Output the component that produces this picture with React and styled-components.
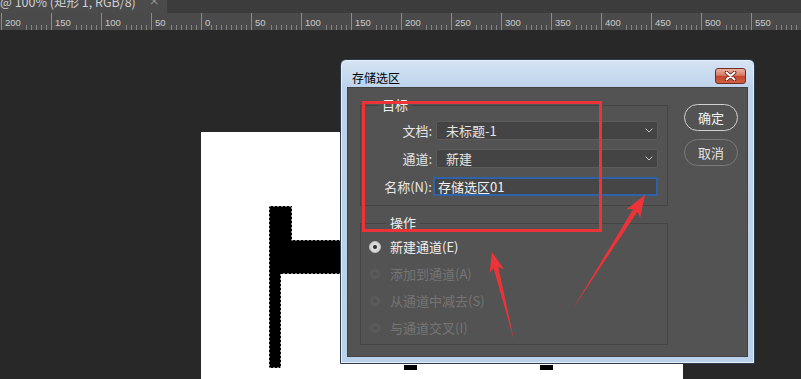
import React from 'react'
import styled, {createGlobalStyle} from 'styled-components'

const rulerLabels = [200, 150, 100, 50, 0, 50, 100, 150, 200, 250, 300, 350, 400, 450, 500, 550]

const targetFields = [
	{id: 'doc', label: '文档:', value: '未标题-1'},
	{id: 'channel', label: '通道:', value: '新建'},
]

const operations = [
	{id: 'new', label: '新建通道(E)', checked: true},
	{id: 'add', label: '添加到通道(A)', disabled: true},
	{id: 'sub', label: '从通道中减去(S)', disabled: true},
	{id: 'cross', label: '与通道交叉(I)', disabled: true},
]

const Chevron = () => (
	<svg width="8" height="5" viewBox="0 0 8 5">
		<path d="M0.6 0.6 L4 4 L7.4 0.6" fill="none" stroke="#c6c6c6" strokeWidth="1" />
	</svg>
)

const CloseGlyph = () => (
	<svg width="13" height="10" viewBox="0 0 13 10">
		<path d="M2.5 1.5 L10.5 8.5 M10.5 1.5 L2.5 8.5" stroke="#5a1d14" strokeWidth="3.6" strokeLinecap="round" />
		<path d="M2.5 1.5 L10.5 8.5 M10.5 1.5 L2.5 8.5" stroke="#ffffff" strokeWidth="2" strokeLinecap="round" />
	</svg>
)

// the selection on the document: black glyph stroke with marching ants
const Selection = () => (
	<svg width="482" height="247" viewBox="0 0 482 247">
		<path d="M68 74 H91 V108 H200 V142 H80 V236 H68 Z" fill="#000" stroke="#fff" strokeWidth="1.2" strokeDasharray="2 2" />
		<rect x="203" y="233" width="13" height="5" fill="#000" />
		<rect x="339" y="233" width="13" height="5" fill="#000" />
	</svg>
)

const Annotations = () => (
	<Overlay width="801" height="379" viewBox="0 0 801 379">
		<rect x="363.5" y="102.5" width="237" height="128" fill="none" stroke="#ec3438" strokeWidth="3" />
		<polygon points="492,252 504.1,269.6 498.3,266.9 514,340 493.5,268.1 489.6,273.2" fill="#ec3438" />
		<polygon points="645,195 640,217.9 637.5,211.5 572,310 633.3,208.9 626.4,209.3" fill="#ec3438" />
	</Overlay>
)

const App = () => {
	return (
		<>
			<GlobalStyle />
			<Screen>
				<DocTabs>
					<DocTab>
						<TabTitle>@ 100% (矩形 1, RGB/8)</TabTitle>
						<TabClose>×</TabClose>
					</DocTab>
				</DocTabs>
				<Ruler>
					{rulerLabels.map((n, i) => (
						<RulerStep key={i}>
							<RulerNum>{n}</RulerNum>
						</RulerStep>
					))}
				</Ruler>
				<Workspace>
					<Canvas>
						<Selection />
					</Canvas>
				</Workspace>

				<Dialog>
					<TitleBar>
						<Title>存储选区</Title>
						<CloseBtn type="button"><CloseGlyph /></CloseBtn>
					</TitleBar>
					<Body>
						<Main>
							<Group $pad="9px 9px 9px 0">
								<Legend>目标</Legend>
								<Rows>
									{targetFields.map(f => (
										<FieldRow key={f.id}>
											<FieldLabel>{f.label}</FieldLabel>
											<SelectBox>
												<span>{f.value}</span>
												<Chevron />
											</SelectBox>
										</FieldRow>
									))}
									<FieldRow>
										<FieldLabel>名称(N):</FieldLabel>
										<NameInput type="text" defaultValue="存储选区01" />
									</FieldRow>
								</Rows>
							</Group>
							<Group $pad="3px 8px 3px 8px" $gapTop="10px">
								<Legend>操作</Legend>
								{operations.map(op => (
									<RadioRow key={op.id} $disabled={op.disabled}>
										<RadioDot $checked={op.checked} />
										{op.label}
									</RadioRow>
								))}
							</Group>
						</Main>
						<Actions>
							<PillBtn type="button" $primary>确定</PillBtn>
							<PillBtn type="button">取消</PillBtn>
						</Actions>
					</Body>
				</Dialog>

				<Annotations />
			</Screen>
		</>
	)
}

const GlobalStyle = createGlobalStyle`
	html, body {
		margin: 0;
		padding: 0;
		background: #282828;
	}
	body {
		font-family: "Noto Sans CJK SC", "Noto Sans", sans-serif;
	}
`

const Screen = styled.div`
	position: relative;
	width: 801px;
	height: 379px;
	overflow: hidden;
	background: #282828;
	display: flex;
	flex-direction: column;
`

const DocTabs = styled.div`
	height: 13px;
	flex: none;
	display: flex;
	background: #3c3c3c;
	overflow: hidden;
`

const DocTab = styled.div`
	width: 167px;
	display: flex;
	align-items: flex-start;
	background: #4b4b4b;
	overflow: hidden;
`

const TabTitle = styled.span`
	margin-top: -5px;
	font-size: 12.5px;
	line-height: 14px;
	color: #cfcfcf;
	white-space: nowrap;
`

const TabClose = styled.span`
	margin: -6px 0 0 13px;
	font-family: "DejaVu Sans", sans-serif;
	font-size: 13px;
	line-height: 14px;
	color: #8e8e8e;
`

const Ruler = styled.div`
	height: 17px;
	flex: none;
	display: flex;
	padding-left: 1px;
	background: #4a4a4a;
	overflow: hidden;
`

const RulerStep = styled.div`
	flex: 0 0 50px;
	box-sizing: border-box;
	height: 100%;
	display: flex;
	align-items: flex-start;
	border-left: 1px solid #8c8c8c;
	background: repeating-linear-gradient(to right, transparent 0 4px, #858585 4px 5px) left bottom / 100% 5px no-repeat;
`

const RulerNum = styled.span`
	margin: 3px 0 0 2px;
	padding: 0 1px;
	font-family: "Liberation Sans", Arial, sans-serif;
	font-size: 9.5px;
	line-height: 14px;
	color: #cacaca;
	background: #4a4a4a;
`

const Workspace = styled.div`
	flex: 1;
	box-sizing: border-box;
	padding: 102px 0 0 201px;
	overflow: hidden;
`

const Canvas = styled.div`
	width: 482px;
	height: 247px;
	background: #fff;
	svg { display: block; }
`

const Dialog = styled.div`
	position: absolute;
	left: 340px;
	top: 59px;
	width: 415px;
	height: 305px;
	box-sizing: border-box;
	display: flex;
	flex-direction: column;
	padding: 0 6px 6px;
	border: 1px solid #2d3b4b;
	border-radius: 6px 6px 0 0;
	background: linear-gradient(#d6e4f4, #bdd3eb 27px, #b9d1ea);
	box-shadow: inset 0 0 0 1px #e6eef8;
`

const TitleBar = styled.div`
	height: 27px;
	flex: none;
	display: flex;
	justify-content: space-between;
	align-items: flex-start;
	padding: 0 2px 0 5px;
`

const Title = styled.span`
	margin-top: 10px;
	font-size: 12px;
	line-height: 16px;
	color: #000;
`

const CloseBtn = styled.button`
	margin-top: 8px;
	width: 31px;
	height: 16px;
	padding: 0;
	display: flex;
	align-items: center;
	justify-content: center;
	border: 1px solid #6d2d22;
	border-radius: 3px;
	background: linear-gradient(#eab0a2, #d77b66 45%, #c4452e 52%, #d0603f);
`

const Body = styled.div`
	height: 270px;
	flex: none;
	box-sizing: border-box;
	display: flex;
	align-items: flex-start;
	gap: 16px;
	padding: 0 9px 0 12px;
	background: #535353;
	border: 1px solid #424242;
`

const Main = styled.div`
	width: 308px;
	padding-top: 10px;
	display: flex;
	flex-direction: column;
`

const Group = styled.fieldset`
	box-sizing: border-box;
	width: 308px;
	min-width: 0;
	margin: ${p => p.$gapTop || 0} 0 0;
	padding: ${p => p.$pad};
	border: 1px solid #444444;
`

const Legend = styled.legend`
	margin-left: 17px;
	padding: 0 4px;
	font-size: 13px;
	line-height: 14px;
	color: #efefef;
`

const Rows = styled.div`
	display: flex;
	flex-direction: column;
	gap: 9px;
`

const FieldRow = styled.div`
	height: 19px;
	display: flex;
	align-items: center;
	gap: 4px;
`

const FieldLabel = styled.span`
	width: 71px;
	flex: none;
	text-align: right;
	font-size: 13px;
	line-height: 19px;
	color: #e6e6e6;
	white-space: nowrap;
`

const SelectBox = styled.div`
	width: 222px;
	height: 19px;
	box-sizing: border-box;
	display: flex;
	align-items: center;
	justify-content: space-between;
	padding: 0 4px 0 9px;
	background: #444444;
	border: 1px solid #5c5c5c;
	border-radius: 2px;
	font-size: 13px;
	line-height: 17px;
	color: #e4e4e4;
`

const NameInput = styled.input`
	width: 226px;
	height: 19px;
	box-sizing: border-box;
	margin: 0 0 0 -3px;
	padding: 0 0 0 3px;
	background: #464646;
	border: 2px solid #2f62a8;
	outline: none;
	font-family: "Noto Sans CJK SC", "Noto Sans", sans-serif;
	font-size: 13px;
	line-height: 15px;
	color: #f2f2f2;
`

const RadioRow = styled.div`
	height: 27px;
	display: flex;
	align-items: center;
	gap: 9px;
	font-size: 13px;
	color: ${p => (p.$disabled ? '#757575' : '#f0f0f0')};
`

const RadioDot = styled.span`
	width: 12px;
	height: 12px;
	flex: none;
	box-sizing: border-box;
	border-radius: 50%;
	display: flex;
	align-items: center;
	justify-content: center;
	background: ${p => (p.$checked ? '#d9d9d9' : '#5a5a5a')};
	border: 1px solid ${p => (p.$checked ? '#bcbcbc' : '#555555')};
	&::after {
		content: '';
		width: 4px;
		height: 4px;
		border-radius: 50%;
		background: ${p => (p.$checked ? '#2e2e2e' : '#515151')};
	}
`

const Actions = styled.div`
	margin-top: 16px;
	display: flex;
	flex-direction: column;
	gap: 8px;
`

const PillBtn = styled.button`
	width: 54px;
	height: 27px;
	box-sizing: border-box;
	padding: 0;
	border-radius: 14px;
	background: #535353;
	border: ${p => (p.$primary ? '1.5px solid #d0d0d0' : '1px solid #7a7a7a')};
	font-family: "Noto Sans CJK SC", "Noto Sans", sans-serif;
	font-size: 13px;
	color: ${p => (p.$primary ? '#f2f2f2' : '#e2e2e2')};
`

const Overlay = styled.svg`
	position: absolute;
	left: 0;
	top: 0;
	pointer-events: none;
`

export default App
